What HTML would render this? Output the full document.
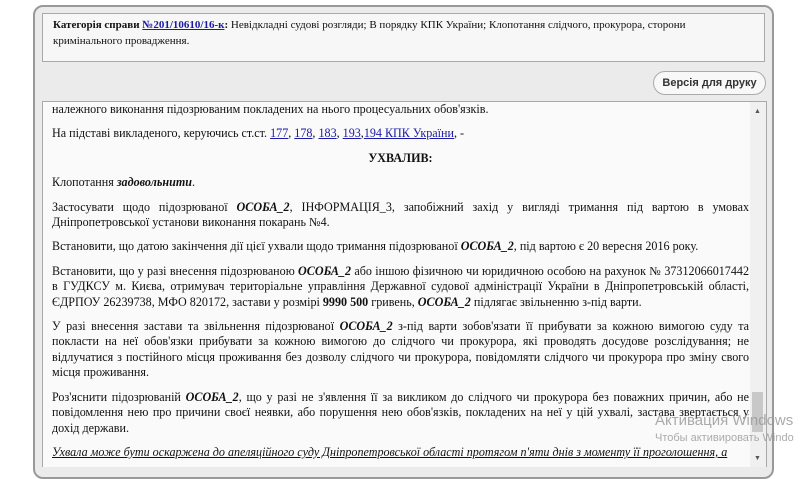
<!DOCTYPE html>
<html><head><meta charset="utf-8"><style>
html,body{margin:0;width:800px;height:467px;overflow:hidden;background:#fff;font-family:"Liberation Serif",serif;color:#111}
.outer{position:absolute;left:33px;top:5px;width:737px;height:470px;background:#ebebeb;border:2px solid #999;border-radius:10px}
.top{position:absolute;left:42px;top:13px;width:723px;height:49px;background:#f7f7f7;border:1px solid #a9a9a9;font-size:11px;line-height:16px;box-sizing:border-box;padding:3px 10px}
.top a{color:#1a1aa6;font-weight:bold}
.btn{position:absolute;left:653px;top:71px;width:113px;height:24px;box-sizing:border-box;border:1px solid #aaa;border-radius:12px;background:#f8f8f8;font-family:"Liberation Sans",sans-serif;font-size:11px;font-weight:bold;color:#333;text-align:center;line-height:22px}
.content{position:absolute;left:42px;top:101px;width:725px;height:366px;background:#fafafa;border:1px solid #a9a9a9;border-bottom:none;box-sizing:border-box;overflow:hidden}
.text{position:absolute;left:9px;top:0;width:697px;font-size:12.1px;line-height:15.4px;text-align:justify}
.text p{margin:0 0 9px}
.sb{position:absolute;right:0;top:0;width:16px;height:100%;background:#f0f0f0}
a.l{color:#1a1aa6;text-decoration:underline}
.wm{position:absolute;left:655px;font-family:"Liberation Sans",sans-serif;color:rgba(150,150,150,.8);white-space:nowrap}
</style></head><body>
<div class="outer"></div>
<div class="top"><b>Категорія справи <a href="#">№201/10610/16-к</a>:</b> Невідкладні судові розгляди; В порядку КПК України; Клопотання слідчого, прокурора, сторони кримінального провадження.</div>
<div class="btn">Версія для друку</div>
<div class="content">
<div class="text">
<p>належного виконання підозрюваним покладених на нього процесуальних обов'язків.</p>
<p>На підставі викладеного, керуючись ст.ст. <a class="l">177</a>, <a class="l">178</a>, <a class="l">183</a>, <a class="l">193</a>,<a class="l">194 КПК України</a>, -</p>
<p style="text-align:center;font-weight:bold">УХВАЛИВ:</p>
<p>Клопотання <b><i>задовольнити</i></b>.</p>
<p>Застосувати щодо підозрюваної <b><i>ОСОБА_2</i></b>, ІНФОРМАЦІЯ_3, запобіжний захід у вигляді тримання під вартою в умовах Дніпропетровської установи виконання покарань №4.</p>
<p>Встановити, що датою закінчення дії цієї ухвали щодо тримання підозрюваної <b><i>ОСОБА_2</i></b>, під вартою є 20 вересня 2016 року.</p>
<p>Встановити, що у разі внесення підозрюваною <b><i>ОСОБА_2</i></b> або іншою фізичною чи юридичною особою на рахунок № 37312066017442 в ГУДКСУ м. Києва, отримувач територіальне управління Державної судової адміністрації України в Дніпропетровській області, ЄДРПОУ 26239738, МФО 820172, застави у розмірі <b>9990 500</b> гривень, <b><i>ОСОБА_2</i></b> підлягає звільненню з-під варти.</p>
<p>У разі внесення застави та звільнення підозрюваної <b><i>ОСОБА_2</i></b> з-під варти зобов'язати її прибувати за кожною вимогою суду та покласти на неї обов'язки прибувати за кожною вимогою до слідчого чи прокурора, які проводять досудове розслідування; не відлучатися з постійного місця проживання без дозволу слідчого чи прокурора, повідомляти слідчого чи прокурора про зміну свого місця проживання.</p>
<p>Роз'яснити підозрюваній <b><i>ОСОБА_2</i></b>, що у разі не з'явлення її за викликом до слідчого чи прокурора без поважних причин, або не повідомлення нею про причини своєї неявки, або порушення нею обов'язків, покладених на неї у цій ухвалі, застава звертається у дохід держави.</p>
<p style="font-style:italic;text-decoration:underline">Ухвала може бути оскаржена до апеляційного суду Дніпропетровської області протягом п'яти днів з моменту її проголошення, а</p>
</div>
<div class="sb"><div style="position:absolute;left:4px;top:5px;font-size:7px;color:#555">▲</div><div style="position:absolute;left:2px;top:290px;width:11px;height:40px;background:#c8c8c8"></div><div style="position:absolute;left:4px;top:352px;font-size:7px;color:#555">▼</div></div>
</div>
<div class="wm" style="top:412px;font-size:15px">Активация Windows</div>
<div class="wm" style="top:432px;font-size:11px">Чтобы активировать Windo</div>
</body></html>
